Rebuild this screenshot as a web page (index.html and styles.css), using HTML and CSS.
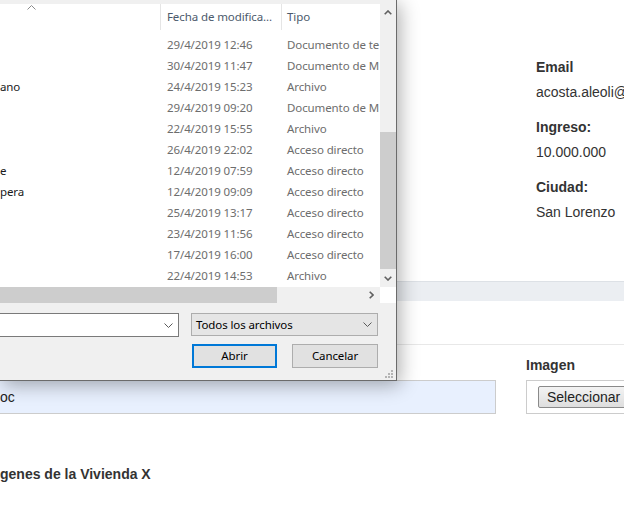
FILE: index.html
```html
<!DOCTYPE html>
<html lang="es">
<head>
<meta charset="utf-8">
<title>Vivienda</title>
<link rel="stylesheet" href="styles.css">
</head>
<body>
<div class="page">
  <section class="profile">
    <dl class="info">
      <dt>Email</dt><dd>acosta.aleoli@</dd>
      <dt>Ingreso:</dt><dd>10.000.000</dd>
      <dt>Ciudad:</dt><dd>San Lorenzo</dd>
    </dl>
  </section>
  <div class="band"></div>
  <section class="uploads">
    <div class="fields">
      <div class="field">
        <div class="input filled">oc</div>
      </div>
      <div class="field">
        <label class="label">Imagen</label>
        <div class="input file"><span class="file-btn">Seleccionar</span></div>
      </div>
    </div>
    <h3 class="gallery-title">genes de la Vivienda X</h3>
  </section>
</div>

<div class="dialog">
  <div class="list">
    <div class="list-view">
      <div class="list-head">
        <div class="hcol hname"><svg class="sort" width="9" height="5" viewBox="0 0 9 5"><path d="M0.5 4.5 L4.5 0.5 L8.5 4.5" fill="none" stroke="#8a8a8a" stroke-width="1"/></svg></div>
        <div class="hcol hdate">Fecha de modifica...</div>
        <div class="hcol htype">Tipo</div>
      </div>
      <div class="rows">
        <div class="row"><span class="c-name"></span><span class="c-date">29/4/2019 12:46</span><span class="c-type">Documento de te</span></div>
        <div class="row"><span class="c-name"></span><span class="c-date">30/4/2019 11:47</span><span class="c-type">Documento de M</span></div>
        <div class="row"><span class="c-name">ano</span><span class="c-date">24/4/2019 15:23</span><span class="c-type">Archivo</span></div>
        <div class="row"><span class="c-name"></span><span class="c-date">29/4/2019 09:20</span><span class="c-type">Documento de M</span></div>
        <div class="row"><span class="c-name"></span><span class="c-date">22/4/2019 15:55</span><span class="c-type">Archivo</span></div>
        <div class="row"><span class="c-name"></span><span class="c-date">26/4/2019 22:02</span><span class="c-type">Acceso directo</span></div>
        <div class="row"><span class="c-name">e</span><span class="c-date">12/4/2019 07:59</span><span class="c-type">Acceso directo</span></div>
        <div class="row"><span class="c-name">pera</span><span class="c-date">12/4/2019 09:09</span><span class="c-type">Acceso directo</span></div>
        <div class="row"><span class="c-name"></span><span class="c-date">25/4/2019 13:17</span><span class="c-type">Acceso directo</span></div>
        <div class="row"><span class="c-name"></span><span class="c-date">23/4/2019 11:56</span><span class="c-type">Acceso directo</span></div>
        <div class="row"><span class="c-name"></span><span class="c-date">17/4/2019 16:00</span><span class="c-type">Acceso directo</span></div>
        <div class="row"><span class="c-name"></span><span class="c-date">22/4/2019 14:53</span><span class="c-type">Archivo</span></div>
      </div>
    </div>
    <div class="vscroll">
      <div class="sbtn"><svg width="8" height="5" viewBox="0 0 8 5"><path d="M0.7 4.3 L4 1 L7.3 4.3" fill="none" stroke="#606060" stroke-width="1.6"/></svg></div>
      <div class="vtrack"><div class="vthumb"></div></div>
      <div class="sbtn"><svg width="8" height="5" viewBox="0 0 8 5"><path d="M0.7 0.7 L4 4 L7.3 0.7" fill="none" stroke="#606060" stroke-width="1.6"/></svg></div>
    </div>
    <div class="hscroll">
      <div class="hthumb"></div>
      <div class="htrack"></div>
      <div class="sbtn"><svg width="5" height="8" viewBox="0 0 5 8"><path d="M0.7 0.7 L4 4 L0.7 7.3" fill="none" stroke="#606060" stroke-width="1.6"/></svg></div>
    </div>
    <div class="corner"></div>
  </div>

  <div class="footer">
    <div class="combo-row">
      <div class="combo fname"><svg class="chev" width="9" height="5" viewBox="0 0 9 5"><path d="M0.5 0.5 L4.5 4.5 L8.5 0.5" fill="none" stroke="#5a5a5a" stroke-width="1"/></svg></div>
      <div class="combo filter"><span>Todos los archivos</span><svg class="chev" width="9" height="5" viewBox="0 0 9 5"><path d="M0.5 0.5 L4.5 4.5 L8.5 0.5" fill="none" stroke="#5a5a5a" stroke-width="1"/></svg></div>
    </div>
    <div class="btn-row">
      <button class="btn default">Abrir</button>
      <button class="btn">Cancelar</button>
    </div>
  </div>
  <svg class="grip" width="9" height="9" viewBox="0 0 9 9" fill="#b4b4b4">
    <rect x="7" y="1" width="2" height="2"/>
    <rect x="4" y="4" width="2" height="2"/><rect x="7" y="4" width="2" height="2"/>
    <rect x="1" y="7" width="2" height="2"/><rect x="4" y="7" width="2" height="2"/><rect x="7" y="7" width="2" height="2"/>
  </svg>
</div>
</body>
</html>
```

FILE: styles.css
```css
html, body {
  margin: 0;
  height: 100%;
  overflow: hidden;
  background: #fff;
}
body {
  font-family: "Liberation Sans", Arial, sans-serif;
  font-size: 14px;
  color: #333;
  position: relative;
}

/* ---------- page behind ---------- */
.page {
  width: 624px;
  overflow: hidden;
}
.profile {
  height: 281px;
  box-sizing: border-box;
  padding: 57px 0 0 536px;
}
.info {
  margin: 0;
  line-height: 20px;
  white-space: nowrap;
}
.info dt {
  font-weight: bold;
  margin-bottom: 5px;
}
.info dd {
  margin: 0 0 15px;
}
.band {
  height: 19px;
  background: #ebeef2;
  border-top: 1px solid #dde1e6;
}
.uploads {
  margin-top: 43px;
  border-top: 1px solid #e8e8e8;
  padding-top: 10px;
}
.fields {
  display: grid;
  grid-template-columns: 496px 200px;
  column-gap: 30px;
  align-items: end;
}
.label {
  display: block;
  font-weight: bold;
  line-height: 20px;
  margin-bottom: 5px;
}
.input {
  height: 34px;
  box-sizing: border-box;
  border: 1px solid #cccccc;
  white-space: nowrap;
}
.filled {
  background: #e8f0fe;
  margin-left: -1px;
  line-height: 32px;
  color: #222;
}
.file {
  background: #fff;
  padding: 5px 0 0 11px;
}
.file-btn {
  display: inline-block;
  height: 22px;
  box-sizing: border-box;
  border: 1px solid #8a8a8a;
  border-radius: 2px;
  background: linear-gradient(#f3f3f3, #dedede);
  padding: 0 8px;
  line-height: 20px;
  color: #222;
}
.gallery-title {
  margin: 50px 0 0;
  font-size: 14px;
  line-height: 20px;
  font-weight: bold;
  color: #333;
  white-space: nowrap;
}

/* ---------- file dialog ---------- */
.dialog {
  position: absolute;
  left: 0;
  top: 0;
  width: 397px;
  height: 381px;
  box-sizing: border-box;
  padding-top: 4px;
  background: #f0f0f0;
  border-right: 1px solid #6b6b6b;
  border-bottom: 1px solid #6b6b6b;
  box-shadow: 3px 4px 18px rgba(0, 0, 0, 0.32);
  font-family: "Noto Sans", "Open Sans", sans-serif;
  font-size: 11.5px;
  letter-spacing: -0.1px;
  color: #000;
}
.list {
  display: grid;
  grid-template-columns: 380px 16px;
  grid-template-rows: 283px 16px;
  background: #fff;
}
.list-view {
  overflow: hidden;
  white-space: nowrap;
}
.list-head {
  display: grid;
  grid-template-columns: 161px 121px 1fr;
  height: 26px;
  color: #4c5a6c;
}
.hcol {
  line-height: 26px;
  overflow: hidden;
}
.hname {
  border-right: 1px solid #e5e5e5;
  position: relative;
}
.sort {
  position: absolute;
  left: 27px;
  top: 1px;
}
.hdate {
  border-right: 1px solid #e5e5e5;
  padding-left: 6px;
}
.htype {
  padding-left: 5px;
}
.rows {
  padding-top: 4px;
}
.row {
  display: grid;
  grid-template-columns: 161px 121px 1fr;
  height: 21px;
  line-height: 21px;
}
.c-name {
  color: #1a1a1a;
  overflow: hidden;
}
.c-date {
  color: #6d6d6d;
  padding-left: 6px;
}
.c-type {
  color: #6d6d6d;
  padding-left: 5px;
  overflow: hidden;
}
.vscroll {
  display: flex;
  flex-direction: column;
  background: #f0f0f0;
}
.sbtn {
  flex: none;
  width: 16px;
  height: 17px;
  display: flex;
  align-items: center;
  justify-content: center;
}
.vtrack {
  flex: 1;
}
.vthumb {
  margin-top: 111px;
  height: 137px;
  background: #cdcdcd;
}
.hscroll {
  display: flex;
  background: #f0f0f0;
}
.hscroll .sbtn {
  width: 17px;
  height: 16px;
}
.hthumb {
  width: 277px;
  background: #cdcdcd;
}
.htrack {
  flex: 1;
}
.corner {
  background: #fff;
}
.footer {
  padding: 10px 18px 0 0;
}
.combo-row {
  display: flex;
  justify-content: space-between;
}
.combo {
  display: flex;
  align-items: center;
  justify-content: space-between;
  box-sizing: border-box;
  height: 24px;
}
.fname {
  width: 180px;
  margin-left: -1px;
  background: #fff;
  border: 1px solid #7a7a7a;
  justify-content: flex-end;
  padding-right: 5px;
}
.filter {
  width: 187px;
  height: 23px;
  background: #e5e5e5;
  border: 1px solid #adadad;
  padding: 0 5px 0 4px;
}
.btn-row {
  display: flex;
  justify-content: flex-end;
  gap: 15px;
  margin-top: 7px;
}
.btn {
  width: 86px;
  height: 24px;
  box-sizing: border-box;
  background: #e1e1e1;
  border: 1px solid #adadad;
  font: inherit;
  letter-spacing: inherit;
  color: #000;
  padding: 0 0 2px;
}
.btn.default {
  width: 85px;
  border: 2px solid #0078d7;
}
.grip {
  position: absolute;
  right: 3px;
  bottom: 2px;
}
```
